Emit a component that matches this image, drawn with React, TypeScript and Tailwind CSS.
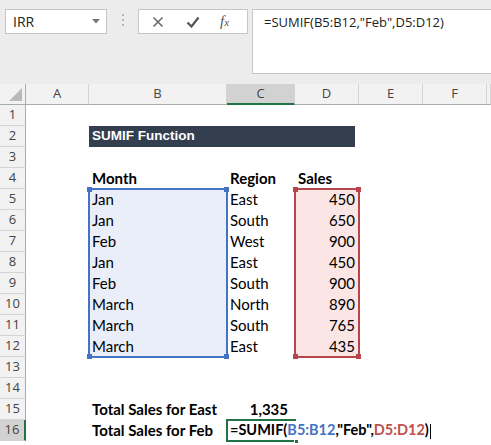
import React from "react";

const CELL_FONT = "font-['Lato','Liberation_Sans',sans-serif]";
const UI_FONT = "font-['Open_Sans','Noto_Sans',sans-serif]";

const COLS = [
  { id: "A", w: "w-[63px]" },
  { id: "B", w: "w-[138px]" },
  { id: "C", w: "w-[68px]" },
  { id: "D", w: "w-[64px]" },
  { id: "E", w: "w-[64px]" },
  { id: "F", w: "w-[64px]" },
  { id: "G", w: "w-[4px]" },
];

const DATA: [string, string, string][] = [
  ["Jan", "East", "450"],
  ["Jan", "South", "650"],
  ["Feb", "West", "900"],
  ["Jan", "East", "450"],
  ["Feb", "South", "900"],
  ["March", "North", "890"],
  ["March", "South", "765"],
  ["March", "East", "435"],
];

function Handle({ className }: { className: string }) {
  return <div className={`absolute h-[5px] w-[5px] ${className}`} />;
}

function Row({ n, children, active }: { n: number; children?: React.ReactNode; active?: boolean }) {
  return (
    <div className="flex h-[21px]">
      <div
        className={`flex w-[26px] shrink-0 items-center justify-center border-b border-[#d4d4d4] text-[13px] text-[#444] ${UI_FONT} ${
          active ? "border-r-2 border-r-[#217346] bg-[#d2d2d2]" : "border-r border-r-[#ababab] bg-[#f2f2f2]"
        }`}
      >
        {n}
      </div>
      <div className={`flex flex-1 ${CELL_FONT} text-[15px] text-black`}>{children}</div>
    </div>
  );
}

export default function App() {
  return (
    <div className="h-[445px] w-[491px] overflow-hidden bg-white">
      {/* Formula bar */}
      <div className={`flex h-[84px] items-start bg-[#ececec] pl-[5px] pt-[9px] ${UI_FONT}`}>
        <div className="flex h-[25px] w-[102px] items-center justify-between border border-[#c6c6c6] bg-white pl-[7px] pr-[6px] text-[14px] text-[#222]">
          <span>IRR</span>
          <svg width="8" height="5" viewBox="0 0 8 5">
            <path d="M0 0h8L4 4.5z" fill="#777" />
          </svg>
        </div>
        <div className="ml-[15px] mr-[14px] mt-[5px] flex flex-col gap-[3px]">
          <div className="h-[2px] w-[2px] bg-[#b5b5b5]" />
          <div className="h-[2px] w-[2px] bg-[#b5b5b5]" />
          <div className="h-[2px] w-[2px] bg-[#b5b5b5]" />
        </div>
        <div className="flex h-[25px] w-[110px] items-center border border-[#c6c6c6] bg-white">
          <svg className="ml-[13px]" width="12" height="12" viewBox="0 0 12 12">
            <path d="M1.5 1.5l9 9M10.5 1.5l-9 9" stroke="#666" strokeWidth="1.5" />
          </svg>
          <svg className="ml-[22px]" width="14" height="12" viewBox="0 0 14 12">
            <path d="M1.5 6.5l4 4L12.5 1.5" stroke="#555" strokeWidth="2.2" fill="none" />
          </svg>
          <span className="ml-[20px] font-['Liberation_Serif',serif] text-[15px] italic text-[#555]">
            f<span className="text-[11px]">x</span>
          </span>
        </div>
        <div className="ml-[4px] h-[65px] flex-1 border border-r-0 border-[#c6c6c6] bg-white pl-[11px] pt-[3px] text-[13px] text-[#222]">
          =SUMIF(B5:B12,"Feb",D5:D12)
        </div>
      </div>

      {/* Column headers */}
      <div className={`flex h-[21px] ${UI_FONT} text-[13px] text-[#444]`}>
        <div className="relative w-[26px] shrink-0 border-b border-r border-[#ababab] bg-[#f2f2f2]">
          <svg className="absolute bottom-[3px] right-[3px]" width="13" height="13" viewBox="0 0 13 13">
            <path d="M13 0V13H0z" fill="#b9b9b9" />
          </svg>
        </div>
        {COLS.map((c) => (
          <div
            key={c.id}
            className={`flex shrink-0 items-center justify-center border-r border-[#d4d4d4] ${c.w} ${
              c.id === "C" ? "border-b-2 border-b-[#217346] bg-[#d2d2d2]" : "border-b border-b-[#ababab] bg-[#f2f2f2]"
            }`}
          >
            {c.id !== "G" && c.id}
          </div>
        ))}
        <div className="flex-1 border-b border-[#ababab] bg-[#f2f2f2]" />
      </div>

      {/* Sheet body */}
      <div className="relative">
        <Row n={1} />
        <Row n={2}>
          <div className="w-[63px]" />
          <div className="flex w-[266px] items-center bg-[#333f4f] pl-[3px] font-['Liberation_Sans',sans-serif] text-[13.5px] font-bold text-white">
            SUMIF Function
          </div>
        </Row>
        <Row n={3} />
        <Row n={4}>
          <div className="w-[63px]" />
          <div className="flex w-[138px] items-end pl-[3px] font-bold">Month</div>
          <div className="flex w-[68px] items-end pl-[3px] font-bold">Region</div>
          <div className="flex w-[64px] items-end pl-[3px] font-bold">Sales</div>
        </Row>
        {DATA.map(([m, r, s], i) => (
          <Row key={i} n={i + 5}>
            <div className="w-[63px]" />
            <div className="flex w-[138px] items-end bg-[#e9eef8] pl-[3px]">{m}</div>
            <div className="flex w-[68px] items-end pl-[3px]">{r}</div>
            <div className="flex w-[64px] items-end justify-end bg-[#fbe5e5] pr-[4px]">{s}</div>
          </Row>
        ))}
        <Row n={13} />
        <Row n={14} />
        <Row n={15}>
          <div className="w-[63px]" />
          <div className="flex w-[138px] items-end whitespace-nowrap pl-[3px] font-bold">Total Sales for East</div>
          <div className="flex w-[68px] items-end justify-end pr-[7px] font-bold">1,335</div>
        </Row>
        <Row n={16} active>
          <div className="w-[63px]" />
          <div className="flex w-[138px] items-end whitespace-nowrap pl-[3px] font-bold">Total Sales for Feb</div>
          <div className="relative flex w-[68px] items-end whitespace-nowrap pl-[3px] text-[14.5px] font-bold">
            <span className="shrink-0">=SUMIF(</span>
            <span className="shrink-0 text-[#4472c4]">B5:B12</span>
            <span className="shrink-0">,"Feb",</span>
            <span className="shrink-0 text-[#c0504d]">D5:D12</span>
            <span className="shrink-0">)</span>
            <span className="mb-[2px] ml-[1px] h-[15px] w-[1px] shrink-0 bg-black" />
          </div>
        </Row>

        {/* Active cell C16 */}
        <div className="absolute left-[226px] top-[314px] h-[23px] w-[70px] border-2 border-r-0 border-[#217346]">
          <div className="absolute -bottom-[4px] -right-[3px] h-[5px] w-[5px] border border-white bg-[#217346]" />
        </div>
        {/* Range highlight for B5:B12 */}
        <div className="absolute left-[88px] top-[83px] h-[170px] w-[140px] border-2 border-[#4472c4]">
          <Handle className="-left-[3px] -top-[3px] bg-[#4472c4]" />
          <Handle className="-right-[3px] -top-[3px] bg-[#4472c4]" />
          <Handle className="-bottom-[3px] -left-[3px] bg-[#4472c4]" />
          <Handle className="-bottom-[3px] -right-[3px] bg-[#4472c4]" />
        </div>
        {/* Range highlight for D5:D12 */}
        <div className="absolute left-[294px] top-[83px] h-[170px] w-[66px] border-2 border-[#b8444c]">
          <Handle className="-left-[3px] -top-[3px] bg-[#b8444c]" />
          <Handle className="-right-[3px] -top-[3px] bg-[#b8444c]" />
          <Handle className="-bottom-[3px] -left-[3px] bg-[#b8444c]" />
          <Handle className="-bottom-[3px] -right-[3px] bg-[#b8444c]" />
        </div>
      </div>
    </div>
  );
}
